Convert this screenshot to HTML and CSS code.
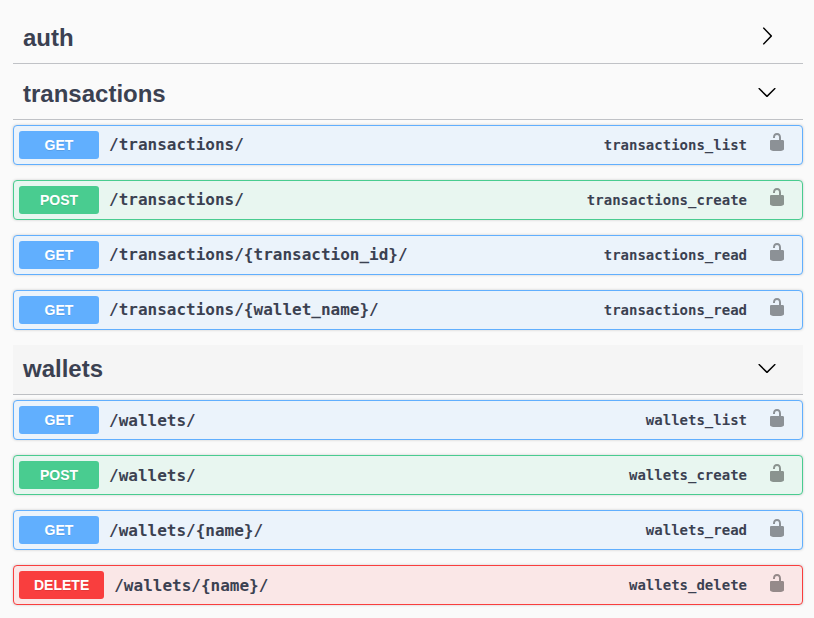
FILE: index.html
```html
<!DOCTYPE html>
<html lang="en">
<head>
<meta charset="utf-8">
<title>API</title>
<link rel="stylesheet" href="styles.css">
</head>
<body>
<svg class="defs" width="0" height="0">
  <symbol id="arrow" viewBox="0 0 20 20"><path d="M13.25 10L6.109 2.58c-.268-.27-.268-.707 0-.979.268-.27.701-.27.969 0l7.83 7.908c.268.271.268.709 0 .979l-7.83 7.908c-.268.271-.701.27-.969 0-.268-.269-.268-.707 0-.979L13.25 10z"/></symbol>
  <symbol id="arrow-down" viewBox="0 0 20 20"><path d="M17.418 6.109c.272-.268.709-.268.979 0s.271.701 0 .969l-7.908 7.83c-.27.268-.707.268-.979 0l-7.908-7.83c-.27-.268-.27-.701 0-.969.271-.268.709-.268.979 0L10 13.25l7.418-7.141z"/></symbol>
  <symbol id="unlocked" viewBox="0 0 20 20"><path d="M15.8 8H14V5.6C14 2.703 12.665 1 10 1 7.334 1 6 2.703 6 5.6V6h2v-.801C8 3.754 8.797 3 10 3c1.203 0 2 .754 2 2.199V8H4c-.553 0-1 .646-1 1.199V17c0 .549.428 1.139.951 1.307l1.197.387C5.672 18.861 6.55 19 7.1 19h5.8c.549 0 1.428-.139 1.951-.307l1.196-.387c.524-.167.953-.757.953-1.306V9.199C17 8.646 16.352 8 15.8 8z"/></symbol>
</svg>
<main>
  <section class="raised">
    <h2>auth<svg class="arrow"><use href="#arrow"/></svg></h2>
  </section>
  <section class="raised">
    <h2>transactions<svg class="arrow"><use href="#arrow-down"/></svg></h2>
    <div class="op get"><b class="method">GET</b><span class="path">/transactions/</span><span class="id">transactions_list</span><svg class="lock"><use href="#unlocked"/></svg></div>
    <div class="op post"><b class="method">POST</b><span class="path">/transactions/</span><span class="id">transactions_create</span><svg class="lock"><use href="#unlocked"/></svg></div>
    <div class="op get"><b class="method">GET</b><span class="path">/transactions/{transaction_id}/</span><span class="id">transactions_read</span><svg class="lock"><use href="#unlocked"/></svg></div>
    <div class="op get"><b class="method">GET</b><span class="path">/transactions/{wallet_name}/</span><span class="id">transactions_read</span><svg class="lock"><use href="#unlocked"/></svg></div>
  </section>
  <section>
    <h2 class="hovered">wallets<svg class="arrow"><use href="#arrow-down"/></svg></h2>
    <div class="op get"><b class="method">GET</b><span class="path">/wallets/</span><span class="id">wallets_list</span><svg class="lock"><use href="#unlocked"/></svg></div>
    <div class="op post"><b class="method">POST</b><span class="path">/wallets/</span><span class="id">wallets_create</span><svg class="lock"><use href="#unlocked"/></svg></div>
    <div class="op get"><b class="method">GET</b><span class="path">/wallets/{name}/</span><span class="id">wallets_read</span><svg class="lock"><use href="#unlocked"/></svg></div>
    <div class="op delete"><b class="method">DELETE</b><span class="path">/wallets/{name}/</span><span class="id">wallets_delete</span><svg class="lock"><use href="#unlocked"/></svg></div>
  </section>
</main>
</body>
</html>
```
FILE: styles.css
```css
* { box-sizing: border-box; }
body {
  margin: 0;
  background: #fafafa;
  color: #3b4151;
  font-family: "Liberation Sans", Arial, sans-serif;
  overflow: hidden;
}
.defs { display: block; }
main { padding: 14px 11px 0 13px; }
h2 {
  display: flex;
  align-items: center;
  justify-content: space-between;
  height: 50px;
  margin: 0 0 5px;
  padding: 0 26px 2px 10px;
  border-bottom: 1px solid rgba(59, 65, 81, .3);
  font-size: 24px;
  line-height: 28px;
}
section:first-child { margin-bottom: 6px; }
.hovered { background: rgba(0, 0, 0, .02); }
.arrow { width: 20px; height: 20px; margin-bottom: 2px; fill: #000; }
.raised .arrow { margin-bottom: 4px; }
.op {
  display: flex;
  align-items: center;
  height: 40px;
  margin-bottom: 15px;
  padding: 0 15px 0 5px;
  border: 1px solid var(--color);
  border-radius: 4px;
  background: var(--tint);
  box-shadow: 0 0 3px rgba(0, 0, 0, .19);
}
.get { --color: #61affe; --tint: #ebf3fb; }
.post { --color: #49cc90; --tint: #e8f6f0; }
.delete { --color: #f93e3e; --tint: #fae7e7; }
.method {
  min-width: 80px;
  height: 28px;
  padding: 0 15px;
  border-radius: 3px;
  background: var(--color);
  color: #fff;
  font-size: 14px;
  line-height: 28px;
  text-align: center;
  text-shadow: 0 1px 0 rgba(0, 0, 0, .1);
}
.path, .id { font-family: "DejaVu Sans Mono", monospace; font-weight: 700; }
.path { flex: 1; padding-left: 10px; font-size: 16px; }
.raised .path { padding-bottom: 2px; }
.id { font-size: 14px; }
.lock { width: 20px; height: 20px; margin: 0 0 5px 20px; fill: #000; opacity: .4; }
.raised .lock { margin-bottom: 7px; }
```
